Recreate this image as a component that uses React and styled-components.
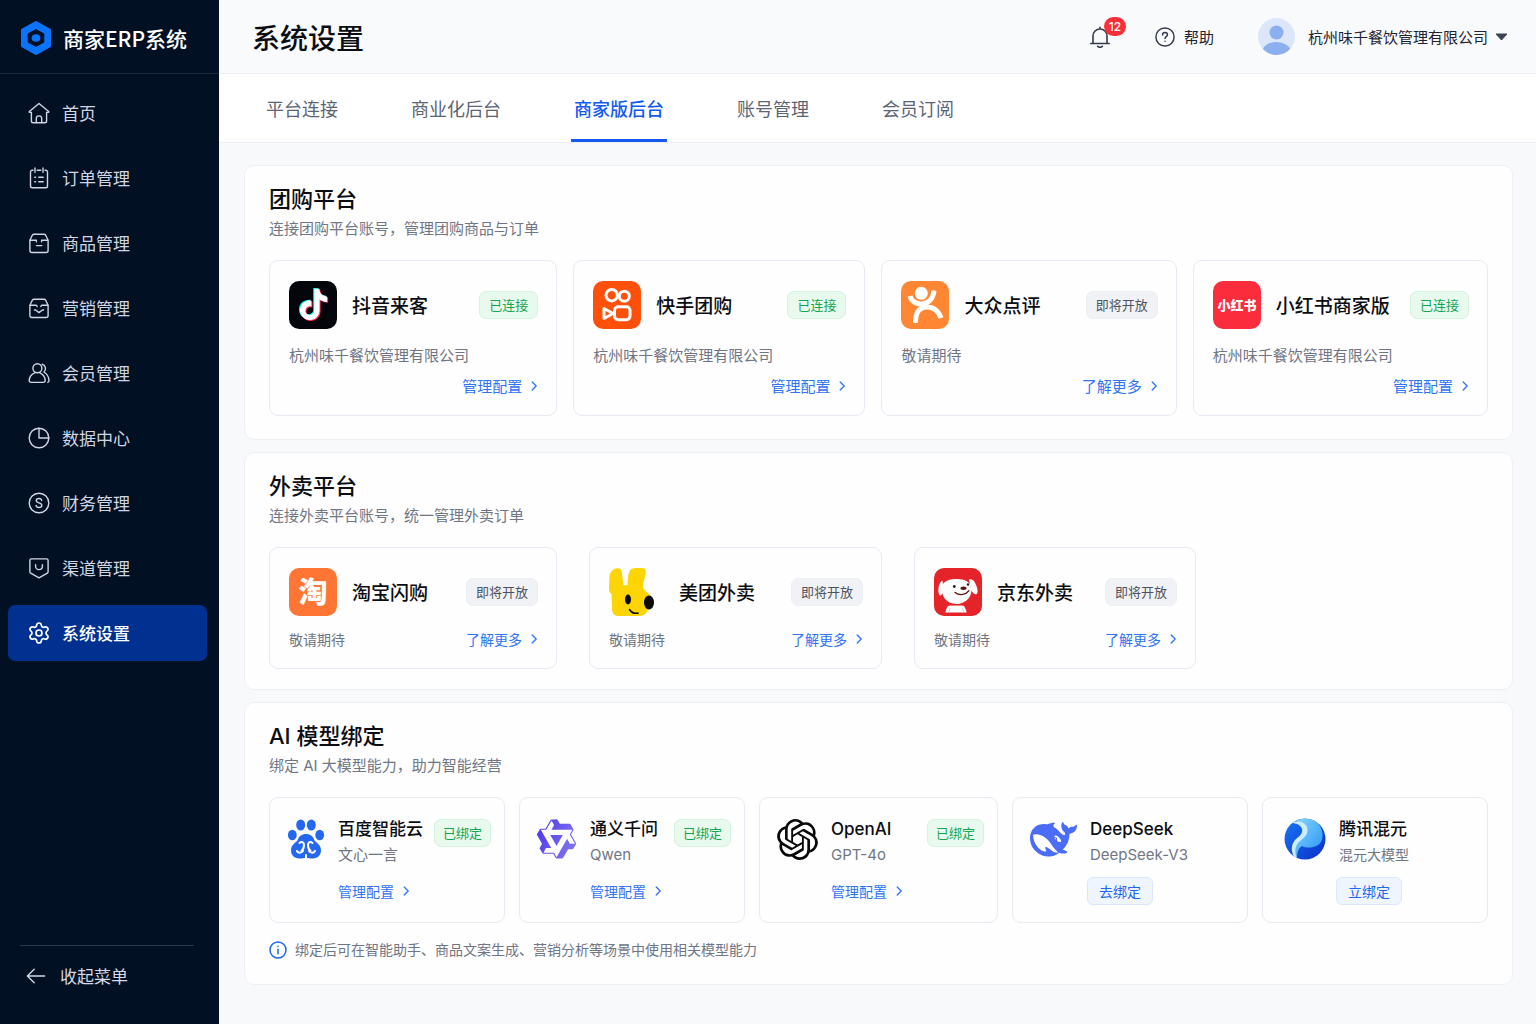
import { useState } from "react";
import styled, { createGlobalStyle, css } from "styled-components";
import { Settings } from "lucide-react";
import { SiOpenai } from "react-icons/si";

const GlobalStyle = createGlobalStyle`
  * {
    box-sizing: border-box;
  }
  body {
    margin: 0;
    background: #f8f9fb;
    color: #0b0d12;
    font-family: "Noto Sans CJK SC", Inter, sans-serif;
    font-size: 15px;
    line-height: 22px;
  }
  button {
    font: inherit;
    color: inherit;
    border: 0;
    padding: 0;
    background: none;
    cursor: pointer;
  }
  a {
    text-decoration: none;
  }
  h1, h2, h3, p {
    margin: 0;
    padding: 0;
  }
  svg {
    display: block;
    flex: none;
  }
`;

/* text that mixes latin words with chinese */
const mixedFont = css`
  font-family: Inter, "Noto Sans CJK SC", sans-serif;
`;

const Shell = styled.div`
  display: flex;
  min-height: 100vh;
`;

/* ---------- sidebar ---------- */

const Sidebar = styled.aside`
  flex: none;
  width: 219px;
  display: flex;
  flex-direction: column;
  background: #011022;
  color: #d5dae6;
`;

const Brand = styled.div`
  height: 74px;
  padding: 2px 20px 0;
  display: flex;
  align-items: center;
  gap: 11px;
  border-bottom: 1px solid #1b293c;
  color: #fff;
  font-size: 21px;
  font-weight: 500;
  white-space: nowrap;
`;

const Nav = styled.nav`
  flex: 1;
  display: flex;
  flex-direction: column;
  gap: 9px;
  padding: 11px 12px 24px 8px;
`;

const NavItem = styled.a`
  height: 56px;
  padding-left: 20px;
  display: flex;
  align-items: center;
  gap: 12px;
  border-radius: 7px;
  font-size: 17px;
  color: ${(p) => (p.$active ? "#fff" : "#d0d6e3")};
  font-weight: ${(p) => (p.$active ? 500 : 400)};
  background: ${(p) => (p.$active ? "#003190" : "transparent")};
`;

const SidebarFooter = styled.div`
  margin: 0 25px 0 20px;
  padding: 15px 0 33px;
  border-top: 1px solid #2a374a;
`;

const Collapse = styled.button`
  display: flex;
  align-items: center;
  gap: 14px;
  height: 30px;
  padding-left: 6px;
  font-size: 17px;
`;

/* ---------- top area ---------- */

const Main = styled.main`
  flex: 1;
  min-width: 0;
  display: flex;
  flex-direction: column;
`;

const Topbar = styled.header`
  height: 74px;
  padding: 0 28px 0 33px;
  display: flex;
  align-items: center;
  justify-content: space-between;
  border-bottom: 1px solid #eceef3;
  background: #f9fafc;
`;

const PageTitle = styled.h1`
  font-size: 28px;
  line-height: 40px;
  font-weight: 500;
`;

const TopActions = styled.div`
  display: flex;
  align-items: center;
  gap: 44px;
  color: #1d2330;
`;

const BellButton = styled.button`
  position: relative;
  color: #333b4c;
`;

const Count = styled.span`
  ${mixedFont}
  position: absolute;
  left: 15px;
  top: -9px;
  height: 19px;
  min-width: 22px;
  border-radius: 10px;
  background: #fa2f38;
  color: #fff;
  font-size: 12px;
  line-height: 19px;
  font-weight: 500;
  text-align: center;
`;

const HelpButton = styled.button`
  display: flex;
  align-items: center;
  gap: 9px;

  svg {
    color: #333b4c;
  }
`;

const Account = styled.button`
  display: flex;
  align-items: center;
  gap: 13px;
`;

const AccountName = styled.span`
  display: flex;
  align-items: center;
  gap: 7px;
`;

const Tabs = styled.div`
  height: 69px;
  padding: 0 44px;
  display: flex;
  gap: 67px;
  background: #fff;
  border-bottom: 1px solid #eceef3;
`;

const Tab = styled.button`
  padding: 0 3px;
  font-size: 18px;
  white-space: nowrap;
  color: #5d6475;
  border-top: 3px solid transparent;
  border-bottom: 3px solid transparent;

  ${(p) =>
    p.$active &&
    css`
      color: #135bf0;
      font-weight: 500;
      border-bottom-color: #135bf0;
    `}
`;

/* ---------- sections ---------- */

const Content = styled.div`
  padding: 22px 23px 22px 25px;
  display: flex;
  flex-direction: column;
  gap: 12px;
`;

const Section = styled.section`
  padding: 18px 24px ${(p) => p.$bottom}px;
  border: 1px solid #eef0f5;
  border-radius: 10px;
  background: #fefefe;
`;

const SectionTitle = styled.h2`
  ${mixedFont}
  font-size: 22px;
  line-height: 30px;
  font-weight: 500;
`;

const SectionHint = styled.p`
  ${mixedFont}
  margin: 4px 0 20px;
  color: #707684;
`;

const CardGrid = styled.div`
  display: grid;
  grid-template-columns: ${(p) => p.$columns};
  gap: ${(p) => p.$gap}px;
`;

const Card = styled.article`
  min-width: 0;
  border: 1px solid #e7eaf2;
  border-radius: 9px;
  background: #fefefe;
`;

const PlatformCard = styled(Card)`
  padding: 20px 18px 18px 19px;
`;

const PlatformHead = styled.div`
  display: flex;
  align-items: center;
  gap: 15px;
`;

const PlatformName = styled.h3`
  flex: 1;
  font-size: 19px;
  line-height: 28px;
  font-weight: 500;
  white-space: nowrap;
`;

const Badge = styled.span`
  flex: none;
  height: 28px;
  padding: 0 9px;
  border: 1px solid ${(p) => (p.$on ? "#d5f3e0" : "#eceef2")};
  border-radius: 7px;
  background: ${(p) => (p.$on ? "#e8f9ee" : "#f1f2f5")};
  color: ${(p) => (p.$on ? "#10a551" : "#4c5262")};
  font-size: 13px;
  line-height: 26px;
  white-space: nowrap;
`;

const PlatformBody = styled.div`
  margin-top: ${(p) => (p.$inline ? 12 : 15)}px;
  display: flex;
  flex-direction: ${(p) => (p.$inline ? "row" : "column")};
  justify-content: space-between;
  gap: 9px;
`;

const Muted = styled.p`
  color: #6f7584;
  font-size: ${(p) => (p.$small ? 14 : 15)}px;
  white-space: nowrap;
`;

const MoreLink = styled.a`
  align-self: flex-end;
  display: flex;
  align-items: center;
  gap: 9px;
  color: #2f74f5;
  font-size: ${(p) => (p.$small ? 14 : 15)}px;
  white-space: nowrap;
`;

const ModelCard = styled(Card)`
  display: flex;
  padding: 18px 13px 17px 17px;
`;

const ModelIcon = styled.div`
  display: flex;
  align-items: center;
  height: 46px;
  margin-right: 13px;
`;

const ModelBody = styled.div`
  flex: 1;
`;

const ModelName = styled.h3`
  ${mixedFont}
  font-size: 17px;
  line-height: 26px;
  font-weight: 500;
  white-space: nowrap;
`;

const ModelSub = styled.p`
  ${mixedFont}
  color: #707684;
  font-size: ${(p) => (p.$small ? 14 : 15)}px;
  line-height: 26px;
`;

const ModelAction = styled.div`
  display: flex;
  align-items: center;
  height: 28px;
  margin-top: 9px;

  ${MoreLink} {
    align-self: center;
  }
`;

const ModelBadge = styled(Badge)`
  margin-top: 3px;
  padding: 0 8px;
`;

const BindButton = styled.button`
  height: 28px;
  margin-left: -3px;
  padding: 0 11px;
  border: 1px solid #dbe7fd;
  border-radius: 6px;
  background: #eff5ff;
  color: #1c66f2;
  font-size: 14px;
  line-height: 26px;
`;

const Note = styled.p`
  ${mixedFont}
  margin-top: 16px;
  display: flex;
  align-items: center;
  gap: 8px;
  color: #6f7584;
  font-size: 14px;
`;

/* ---------- icons ---------- */

const Line = ({ size = 22, width = 1.4, children }) => (
  <svg
    width={size}
    height={size}
    viewBox="0 0 22 22"
    fill="none"
    stroke="currentColor"
    strokeWidth={width}
    strokeLinecap="round"
    strokeLinejoin="round"
    aria-hidden="true"
  >
    {children}
  </svg>
);

const HomeIcon = () => (
  <Line>
    <path d="M3.4 10.4H1.6a.5.5 0 0 1-.3-.9L11 1.5l9.7 8a.5.5 0 0 1-.3.9h-1.8" />
    <path d="M3.4 10.4V19a1.8 1.8 0 0 0 1.8 1.8h11.6a1.8 1.8 0 0 0 1.8-1.8v-8.6" />
    <path d="M8.3 20.6v-4a2.7 2.7 0 0 1 5.4 0v4" />
  </Line>
);

const OrderIcon = () => (
  <Line>
    <path d="M5 3.2h-.8a1.7 1.7 0 0 0-1.7 1.7v14a1.8 1.8 0 0 0 1.8 1.8h13.4a1.8 1.8 0 0 0 1.8-1.8v-14a1.7 1.7 0 0 0-1.7-1.7H17M9.2 3.2h3.6" />
    <path d="M7 1v4.2M15 1v4.2M6.8 10.2h.8M10.8 10.2h4.4M6.8 14.7h.8M10.8 14.7h4.4" />
  </Line>
);

const BoxShape = () => (
  <path d="M1.9 8.2 4.3 3.3A2 2 0 0 1 6.1 2.2h9.8a2 2 0 0 1 1.8 1.1l2.4 4.9v10.3a2 2 0 0 1-2 2H3.9a2 2 0 0 1-2-2z" />
);

const GoodsIcon = () => (
  <Line>
    <BoxShape />
    <path d="M2.2 8.2h6.2v1.6M19.8 8.2h-6.2v1.6M8.4 13.6h5.4" />
  </Line>
);

const MarketingIcon = () => (
  <Line>
    <BoxShape />
    <path d="M2.2 8.2h6l1 1.2M19.8 8.2h-6l-1 1.2M6.4 13h1.2l3.4 2.6 3.4-2.6h1.2" />
  </Line>
);

const MemberIcon = () => (
  <Line>
    <circle cx="9.4" cy="6.3" r="4.5" />
    <path d="M6.6 10.8c-3.2 1.4-5.2 4.3-5.4 7.6a1.9 1.9 0 0 0 1.9 2h12.2a1.9 1.9 0 0 0 1.9-2c-.2-3.3-2.2-6.2-5.2-7.6" />
    <path d="M14.2 2.2a4.5 4.5 0 0 1 1.7 7.8c2.8 1.6 4.900 4.800 5.100 8.600a1.700 1.700 0 0 1-1.200 1.700" />
  </Line>
);

const DataIcon = () => (
  <Line>
    <circle cx="11" cy="11" r="9.8" />
    <path d="M11 1.2V11h9.8" />
  </Line>
);

const FinanceIcon = () => (
  <Line>
    <circle cx="11" cy="11" r="9.8" />
    <path d="M13.7 8.5c-.2-1.300-1.300-2-2.700-2s-2.700.8-2.700 2.100c0 1.400 1.200 1.900 2.700 2.300s2.800 1 2.800 2.400-1.200 2.200-2.800 2.200-2.700-.8-2.900-2.100" />
  </Line>
);

const ChannelIcon = () => (
  <Line>
    <path d="M3.4 1.9h15.200a1.500 1.500 0 0 1 1.500 1.500v11.300c0 .6-.3 1.100-.8 1.400L11 20.900l-8.300-4.800a1.600 1.600 0 0 1-.8-1.400V3.400a1.500 1.500 0 0 1 1.500-1.500z" />
    <path d="M7.6 7.800v1.400a3.400 3.400 0 0 0 6.800 0V7.800" />
  </Line>
);

const GearIcon = () => <Settings size={22} viewBox="1 1 22 22" strokeWidth={1.7} aria-hidden="true" />;

const Chevron = () => (
  <svg width="7" height="10" viewBox="0 0 7 10" fill="none" stroke="currentColor" strokeWidth="1.3" strokeLinecap="round" strokeLinejoin="round" aria-hidden="true">
    <path d="M1.2 1l4 4-4 4" />
  </svg>
);

const BrandLogo = () => (
  <svg width="32" height="36" viewBox="0 0 32 36" aria-hidden="true">
    <path d="M16 2.5 29.5 10v16L16 33.5 2.5 26V10z" fill="#0a74fb" stroke="#0a74fb" strokeWidth="3" strokeLinejoin="round" />
    <path d="M16 9.6 23.8 13.8v8.4L16 26.4l-7.8-4.200v-8.400z" fill="#011022" stroke="#011022" strokeLinejoin="round" />
    <ellipse cx="16" cy="18" rx="4.4" ry="3.8" fill="#0a74fb" />
  </svg>
);

const Avatar = () => (
  <svg width="37" height="37" viewBox="0 0 37 37" aria-hidden="true">
    <defs>
      <clipPath id="avatarClip">
        <circle cx="18.5" cy="18.5" r="18.5" />
      </clipPath>
    </defs>
    <g clipPath="url(#avatarClip)">
      <rect width="37" height="37" fill="#dbe6fb" />
      <circle cx="18.5" cy="14.5" r="7" fill="#8caff0" />
      <ellipse cx="18.5" cy="33" rx="14" ry="9" fill="#8caff0" />
    </g>
  </svg>
);

const notePath =
  "M12.525.02c1.31-.02 2.61-.01 3.91-.02.08 1.53.63 3.09 1.75 4.17 1.12 1.11 2.7 1.62 4.24 1.79v4.03c-1.44-.05-2.89-.35-4.2-.97-.57-.26-1.1-.59-1.62-.93-.01 2.92.01 5.84-.02 8.75-.08 1.4-.54 2.79-1.35 3.94-1.31 1.92-3.58 3.17-5.91 3.21-1.43.08-2.86-.31-4.08-1.03-2.02-1.19-3.44-3.37-3.65-5.71-.02-.5-.03-1-.01-1.49.18-1.9 1.12-3.72 2.58-4.96 1.66-1.44 3.98-2.13 6.15-1.72.02 1.48-.04 2.96-.04 4.44-.99-.32-2.15-.23-3.02.37-.63.41-1.11 1.04-1.36 1.75-.21.51-.15 1.07-.14 1.61.24 1.64 1.82 3.02 3.5 2.87 1.12-.01 2.19-.66 2.77-1.61.19-.33.4-.67.41-1.06.1-1.79.06-3.57.07-5.36.01-4.03-.01-8.05.02-12.07z";

const Tile = ({ fill, children }) => (
  <svg width="48" height="48" viewBox="0 0 48 48" aria-hidden="true">
    <rect width="48" height="48" rx="10" fill={fill} />
    {children}
  </svg>
);

const DouyinLogo = () => (
  <Tile fill="#05060b">
    <path d={notePath} fill="#25f4ee" transform="translate(8 7) scale(1.3)" />
    <path d={notePath} fill="#fe2c55" transform="translate(10 8.8) scale(1.3)" />
    <path d={notePath} fill="#fff" transform="translate(9 7.9) scale(1.3)" />
  </Tile>
);

const KuaishouLogo = () => (
  <Tile fill="#fe4f0b">
    <g fill="none" stroke="#fff" strokeWidth="3" strokeLinejoin="round">
      <circle cx="18.7" cy="14.2" r="5.7" />
      <circle cx="31.3" cy="15.2" r="5" />
      <rect x="21.5" y="25.7" width="15.5" height="13" rx="3.6" />
      <path d="M11 27.5v10l9-5z" />
    </g>
  </Tile>
);

const DianpingLogo = () => (
  <Tile fill="#ff8733">
    <circle cx="20.3" cy="12.3" r="6.5" fill="#fff" />
    <g fill="none" stroke="#fff" strokeWidth="5">
      <path d="M9 15C11.5 26 31.5 27 33 9.5" />
      <path d="M14.5 42C14.3 30 19.5 26 25.5 26c7 0 12 4 14.5 11" />
    </g>
  </Tile>
);

const LogoText = styled.text`
  fill: #fff;
  font-weight: 900;
  font-size: ${(p) => p.$size}px;
  text-anchor: middle;
`;

const XhsLogo = () => (
  <Tile fill="#fb2c3b">
    <LogoText x="24" y="29" $size={13}>小红书</LogoText>
  </Tile>
);

const TaobaoLogo = () => (
  <Tile fill="#ff7634">
    <LogoText x="24" y="35" $size={29}>淘</LogoText>
  </Tile>
);

const MeituanLogo = () => (
  <svg width="55" height="48" viewBox="0 0 55 48" aria-hidden="true">
    <path d="M.5 9C1 3 5 0 9 .2c3 .2 3.8 2 4 5 .2 4 1.3 8 1.5 12h4c0-5 .3-10 2-14C21.5.8 24 0 27 0h6c3 .2 4.5 2 3.8 5-.8 5-2.8 10-2.8 14.5 1.5 3 4 5 8 8.5 2.5 5 .5 11-3 14.500-2 3.500-5 5.500-9 5.500H9c-4 0-6-3-6-8L2.500 26C.8 25 0 23 0 20z" fill="#fdd505" />
    <ellipse cx="19" cy="31.5" rx="3" ry="5" fill="#0b0b0b" />
    <ellipse cx="40" cy="34.5" rx="5" ry="7" fill="#0b0b0b" />
    <path d="M20.500 41.500c2 3.200 5 4.300 8.500 3.600" fill="none" stroke="#0b0b0b" strokeWidth="1.6" strokeLinecap="round" />
  </svg>
);

const JdLogo = () => (
  <Tile fill="#e5242a">
    <path d="M15 37h14c2 2 3 4.500 3.600 7.500H11.500c.3-3 1.500-5.500 3.500-7.500z" fill="#fff" />
    <path d="M12 36.800h20" stroke="#e5242a" strokeWidth="1.6" />
    <path d="M8.500 12.500C5.500 14 4 19 4.500 24c.3 2.500 1.200 4 2.600 3.300L10 24zM35 11.500c4-1.500 6.500 3 8 8 1 3.800.8 6.500-1 6.800-2 .1-3.500-2-4.800-4z" fill="#fff" />
    <path d="M8 18c1.500-5.500 9-7.500 15-7 7 .3 13 2 14.200 8.500C39 28 32 36 22.500 36 12 36 6.500 27 8 18z" fill="#fdfdfd" />
    <circle cx="20.3" cy="18.5" r="1.4" fill="#222" />
    <circle cx="34" cy="16.5" r="1.2" fill="#222" />
    <ellipse cx="29.5" cy="20.3" rx="3" ry="1.7" fill="#5a1010" />
    <path d="M21 24.500c4.500 3.500 11 2.300 14-1.800" fill="none" stroke="#5a1010" strokeWidth="1.3" strokeLinecap="round" />
    <path d="M16 40l-1.500 4.500M28.500 40l1.500 4.500" stroke="#d9b9b9" strokeWidth=".8" />
  </Tile>
);

const BaiduLogo = () => (
  <svg width="38" height="40" viewBox="0 0 38 40" aria-hidden="true">
    <g fill="#2468f2">
      <ellipse cx="13.7" cy="6" rx="4.5" ry="5.5" />
      <ellipse cx="24.3" cy="6" rx="4.5" ry="5.5" />
      <ellipse cx="5.3" cy="16" rx="4.4" ry="5.2" />
      <ellipse cx="32.7" cy="16" rx="4.4" ry="5.2" />
      <path d="M19 15c4.500 0 7.200 2.500 8.300 6 .8 2.300 6.700 4 6.700 10.300 0 5-3.500 8.200-8 8.200-3 0-5-.8-7-.8s-4 .8-7 .8c-4.500 0-8-3.200-8-8.200C4 25 9.900 23.300 10.700 21c1.100-3.500 3.800-6 8.300-6z" />
    </g>
    <g fill="none" stroke="#fff" strokeWidth="2" strokeLinecap="round">
      <path d="M12.500 24c2.200-2 4.500-1 4.500 2 0 2.700-.7 4.500-2.500 5.800M25.500 24c-2.200-2-4.500-1-4.500 2 0 2.700.7 4.500 2.500 5.800" />
      <path d="M10 32c1 2.200 4.500 2.200 6 0M28 32c-1 2.200-4.500 2.200-6 0M19 36V40" />
    </g>
  </svg>
);

const QwenLogo = () => (
  <svg width="40" height="42" viewBox="1 0.8 22.5 22.5" aria-hidden="true">
    <defs>
      <linearGradient id="qwenFill" x1="0" x2="1" y1="0" y2="0.4">
        <stop offset="0" stopColor="#4b35ea" />
        <stop offset="1" stopColor="#7c70ee" />
      </linearGradient>
    </defs>
    <path
      fill="url(#qwenFill)"
      d="M12.604 1.34c.393.69.784 1.382 1.174 2.075a.18.18 0 00.157.091h5.552c.174 0 .322.11.446.327l1.454 2.57c.19.337.24.478.024.837-.26.43-.513.864-.76 1.3l-.367.658c-.106.196-.223.28-.04.512l2.652 4.637c.172.301.111.494-.043.77-.437.785-.882 1.564-1.335 2.34-.159.272-.352.375-.68.37-.777-.016-1.552-.01-2.327.016a.099.099 0 00-.081.05 575.097 575.097 0 01-2.705 4.74c-.169.293-.38.363-.725.364-.997.003-2.002.004-3.017.002a.537.537 0 01-.465-.271l-1.335-2.323a.09.09 0 00-.083-.049H4.982c-.285.03-.553-.001-.805-.092l-1.603-2.77a.543.543 0 01-.002-.54l1.207-2.12a.198.198 0 000-.197 550.951 550.951 0 01-1.875-3.272l-.79-1.395c-.16-.31-.173-.496.095-.965.465-.813.927-1.625 1.387-2.436.132-.234.304-.334.584-.335a338.3 338.3 0 012.589-.001.124.124 0 00.107-.063l2.806-4.895a.488.488 0 01.422-.246c.524-.001 1.053 0 1.583-.006L11.704 1c.341-.003.724.032.9.34zm-3.432.403a.06.06 0 00-.052.03L6.254 6.788a.157.157 0 01-.135.078H3.253c-.056 0-.07.025-.041.074l5.81 10.156c.025.042.013.062-.034.063l-2.795.015a.218.218 0 00-.2.116l-1.32 2.31c-.044.078-.021.118.068.118l5.716.008c.046 0 .08.02.104.061l1.403 2.454c.046.081.092.082.139 0l5.006-8.76.783-1.382a.055.055 0 01.096 0l1.424 2.53a.122.122 0 00.107.062l2.763-.02a.04.04 0 00.035-.02.041.041 0 000-.04l-2.9-5.086a.108.108 0 010-.113l.293-.507 1.12-1.977c.024-.041.012-.062-.035-.062H9.2c-.059 0-.073-.026-.043-.077l1.434-2.505a.107.107 0 000-.114L9.225 1.774a.06.06 0 00-.053-.031zm6.29 8.02c.046 0 .058.02.034.06l-.832 1.465-2.613 4.585a.056.056 0 01-.05.029.058.058 0 01-.05-.029L8.498 9.841c-.02-.034-.01-.052.028-.054l.216-.012 6.722-.012z"
    />
  </svg>
);

const DeepSeekLogo = () => (
  <svg width="47" height="47" viewBox="0 0 24 24" aria-hidden="true">
    <path
      fill="#4a6cf7"
      d="M23.748 4.482c-.254-.124-.364.113-.512.234-.051.039-.094.09-.137.136-.372.397-.806.657-1.373.626-.829-.046-1.537.214-2.163.848-.133-.782-.575-1.248-1.247-1.548-.352-.156-.708-.311-.955-.65-.172-.241-.219-.51-.305-.774-.055-.16-.11-.323-.293-.35-.2-.031-.278.136-.356.276-.313.572-.434 1.202-.422 1.84.027 1.436.633 2.58 1.838 3.393.137.093.172.187.129.323-.082.28-.18.552-.266.833-.055.179-.137.217-.329.14a5.526 5.526 0 01-1.736-1.18c-.857-.828-1.631-1.742-2.597-2.458a11.365 11.365 0 00-.689-.471c-.985-.957.13-1.743.388-1.836.27-.098.093-.432-.779-.428-.872.004-1.67.295-2.687.684a3.055 3.055 0 01-.465.137 9.597 9.597 0 00-2.883-.102c-1.885.21-3.39 1.102-4.497 2.623C.082 8.606-.231 10.684.152 12.85c.403 2.284 1.569 4.175 3.36 5.653 1.858 1.533 3.997 2.284 6.438 2.14 1.482-.085 3.133-.284 4.994-1.86.47.234.962.327 1.78.397.63.059 1.236-.03 1.705-.128.735-.156.684-.837.419-.961-2.155-1.004-1.682-.595-2.113-.926 1.096-1.296 2.746-2.642 3.392-7.003.05-.347.007-.565 0-.845-.004-.17.035-.237.23-.256a4.173 4.173 0 001.545-.475c1.396-.763 1.96-2.015 2.093-3.517.02-.23-.004-.467-.247-.588zM11.581 18c-2.089-1.642-3.102-2.183-3.52-2.16-.392.024-.321.471-.235.763.09.288.207.486.371.739.114.167.192.416-.113.603-.673.416-1.842-.14-1.897-.167-1.361-.802-2.5-1.86-3.301-3.307-.774-1.393-1.224-2.887-1.298-4.482-.02-.386.093-.522.477-.592a4.696 4.696 0 011.529-.039c2.132.312 3.946 1.265 5.468 2.774.868.86 1.525 1.887 2.202 2.891.72 1.066 1.494 2.082 2.48 2.914.348.292.625.514.891.677-.802.09-2.14.11-3.054-.614zm1-6.44a.306.306 0 01.415-.287.302.302 0 01.2.288.306.306 0 01-.31.307.303.303 0 01-.304-.308zm3.11 1.596c-.2.081-.399.151-.59.16a1.245 1.245 0 01-.798-.254c-.274-.23-.47-.358-.552-.758a1.73 1.73 0 01.016-.588c.07-.327-.008-.537-.239-.727-.187-.156-.426-.199-.688-.199a.559.559 0 01-.254-.078c-.11-.054-.2-.19-.114-.358.028-.054.16-.186.192-.21.356-.202.767-.136 1.146.016.352.144.618.408 1.001.782.391.451.462.576.685.914.176.265.336.537.445.848.067.195-.019.354-.25.452z"
    />
  </svg>
);

const HunyuanLogo = () => (
  <svg width="46" height="42" viewBox="0 0 46 42" aria-hidden="true">
    <defs>
      <linearGradient id="hyLight" x1="0" x2="1" y1="0" y2="1">
        <stop offset="0" stopColor="#8fd8ff" />
        <stop offset="1" stopColor="#1f90f5" />
      </linearGradient>
      <linearGradient id="hyDark" x1="0" x2="1" y1="0" y2="1">
        <stop offset="0" stopColor="#1877f5" />
        <stop offset="1" stopColor="#0a2fc8" />
      </linearGradient>
      <clipPath id="hyClip">
        <circle cx="25" cy="21" r="20.5" />
      </clipPath>
    </defs>
    <g clipPath="url(#hyClip)">
      <rect x="4" width="42" height="42" fill="url(#hyDark)" />
      <path d="M13 3C20 0 30 0 35 3c6 4 9 12 7 19-3 8-14 9-20 6-4 2-5 7-5 13-3-6-4-12 0-17 4-4 9-7 8-13-1-5-6-8-12-8z" fill="url(#hyLight)" />
      <path d="M11 5c6-3 14-1 16 4 2 7-3 11-7 14-5 4-6 10-3 18l-3-2c-4-8-2-14 2-18 4-3 7-6 6-10s-6-6-11-6z" fill="#cdeeff" />
    </g>
  </svg>
);

/* ---------- data ---------- */

const navItems = [
  { label: "首页", Icon: HomeIcon },
  { label: "订单管理", Icon: OrderIcon },
  { label: "商品管理", Icon: GoodsIcon },
  { label: "营销管理", Icon: MarketingIcon },
  { label: "会员管理", Icon: MemberIcon },
  { label: "数据中心", Icon: DataIcon },
  { label: "财务管理", Icon: FinanceIcon },
  { label: "渠道管理", Icon: ChannelIcon },
  { label: "系统设置", Icon: GearIcon },
];

const tabs = ["平台连接", "商业化后台", "商家版后台", "账号管理", "会员订阅"];

const company = "杭州味千餐饮管理有限公司";

const groupPlatforms = [
  { name: "抖音来客", Logo: DouyinLogo, on: true },
  { name: "快手团购", Logo: KuaishouLogo, on: true },
  { name: "大众点评", Logo: DianpingLogo, on: false },
  { name: "小红书商家版", Logo: XhsLogo, on: true },
];

const takeoutPlatforms = [
  { name: "淘宝闪购", Logo: TaobaoLogo, on: false },
  { name: "美团外卖", Logo: MeituanLogo, on: false },
  { name: "京东外卖", Logo: JdLogo, on: false },
];

const models = [
  { name: "百度智能云", sub: "文心一言", icon: <BaiduLogo />, bound: true },
  { name: "通义千问", sub: "Qwen", icon: <QwenLogo />, bound: true },
  { name: "OpenAI", sub: "GPT-4o", icon: <SiOpenai size={41} color="#08090b" />, bound: true },
  { name: "DeepSeek", sub: "DeepSeek-V3", icon: <DeepSeekLogo />, action: "去绑定" },
  { name: "腾讯混元", sub: "混元大模型", icon: <HunyuanLogo />, action: "立绑定", small: true },
];

function Platform({ item, inline }) {
  const { name, Logo, on } = item;
  return (
    <PlatformCard>
      <PlatformHead>
        <Logo />
        <PlatformName>{name}</PlatformName>
        <Badge $on={on}>{on ? "已连接" : "即将开放"}</Badge>
      </PlatformHead>
      <PlatformBody $inline={inline}>
        <Muted $small={inline}>{on ? company : "敬请期待"}</Muted>
        <MoreLink href="#" $small={inline}>
          {on ? "管理配置" : "了解更多"}
          <Chevron />
        </MoreLink>
      </PlatformBody>
    </PlatformCard>
  );
}

function Model({ item }) {
  return (
    <ModelCard>
      <ModelIcon>{item.icon}</ModelIcon>
      <ModelBody>
        <ModelName>{item.name}</ModelName>
        <ModelSub $small={item.small}>{item.sub}</ModelSub>
        <ModelAction>
          {item.bound ? (
            <MoreLink href="#" $small>
              管理配置
              <Chevron />
            </MoreLink>
          ) : (
            <BindButton type="button">{item.action}</BindButton>
          )}
        </ModelAction>
      </ModelBody>
      {item.bound && <ModelBadge $on>已绑定</ModelBadge>}
    </ModelCard>
  );
}

function App() {
  const [activeTab, setActiveTab] = useState("商家版后台");
  return (
    <>
      <GlobalStyle />
      <Shell>
        <Sidebar>
          <Brand>
            <BrandLogo />
            商家ERP系统
          </Brand>
          <Nav>
            {navItems.map(({ label, Icon }) => (
              <NavItem key={label} href="#" $active={label === "系统设置"}>
                <Icon />
                {label}
              </NavItem>
            ))}
          </Nav>
          <SidebarFooter>
            <Collapse type="button">
              <Line size={20} width={1.5}>
                <path d="M20.500 11h-19M9 3.500L1.500 11 9 18.500" />
              </Line>
              收起菜单
            </Collapse>
          </SidebarFooter>
        </Sidebar>

        <Main>
          <Topbar>
            <PageTitle>系统设置</PageTitle>
            <TopActions>
              <BellButton type="button" aria-label="通知">
                <Line width={1.6}>
                  <path d="M1.800 17.500h18.400M4 17.500V10a7 7 0 0 1 14 0v7.500M11 3V1.200M8.600 20.300c.6.700 1.400 1 2.400 1s1.800-.3 2.400-1" />
                </Line>
                <Count>12</Count>
              </BellButton>
              <HelpButton type="button">
                <Line size={20} width={1.6}>
                  <circle cx="11" cy="11" r="10" />
                  <path d="M8.300 8.700c0-1.600 1.200-2.600 2.700-2.600s2.700 1 2.700 2.500c0 2-2.700 2.100-2.700 4.100M11 15.700v.1" />
                </Line>
                帮助
              </HelpButton>
              <Account type="button">
                <Avatar />
                <AccountName>
                  {company}
                  <svg width="13" height="8" viewBox="0 0 13 8" aria-hidden="true">
                    <path d="M1 1h11L6.500 7z" fill="#3c4456" stroke="#3c4456" strokeLinejoin="round" />
                  </svg>
                </AccountName>
              </Account>
            </TopActions>
          </Topbar>

          <Tabs role="tablist">
            {tabs.map((tab) => (
              <Tab
                key={tab}
                type="button"
                role="tab"
                aria-selected={tab === activeTab}
                $active={tab === activeTab}
                onClick={() => setActiveTab(tab)}
              >
                {tab}
              </Tab>
            ))}
          </Tabs>

          <Content>
            <Section $bottom={23}>
              <SectionTitle>团购平台</SectionTitle>
              <SectionHint>连接团购平台账号，管理团购商品与订单</SectionHint>
              <CardGrid $columns="288fr 292fr 295fr 295fr" $gap={16}>
                {groupPlatforms.map((item) => (
                  <Platform key={item.name} item={item} />
                ))}
              </CardGrid>
            </Section>

            <Section $bottom={20}>
              <SectionTitle>外卖平台</SectionTitle>
              <SectionHint>连接外卖平台账号，统一管理外卖订单</SectionHint>
              <CardGrid $columns="288fr 293fr 282fr 260fr" $gap={32}>
                {takeoutPlatforms.map((item) => (
                  <Platform key={item.name} item={item} inline />
                ))}
              </CardGrid>
            </Section>

            <Section $bottom={23}>
              <SectionTitle>AI 模型绑定</SectionTitle>
              <SectionHint>绑定 AI 大模型能力，助力智能经营</SectionHint>
              <CardGrid $columns="236fr 226fr 239fr 236fr 226fr" $gap={14}>
                {models.map((item) => (
                  <Model key={item.name} item={item} />
                ))}
              </CardGrid>
              <Note>
                <svg width="18" height="18" viewBox="0 0 18 18" fill="none" stroke="#1c66f2" strokeWidth="1.5" strokeLinecap="round" aria-hidden="true">
                  <circle cx="9" cy="9" r="8" />
                  <path d="M9 8.200v4.600M9 5.300v.1" />
                </svg>
                绑定后可在智能助手、商品文案生成、营销分析等场景中使用相关模型能力
              </Note>
            </Section>
          </Content>
        </Main>
      </Shell>
    </>
  );
}

export default App;
